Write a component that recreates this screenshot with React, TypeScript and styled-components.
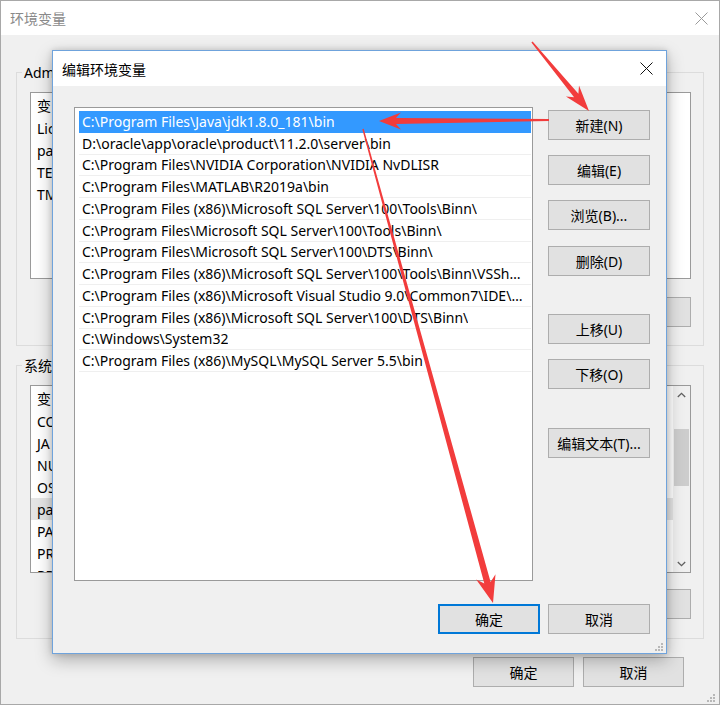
import React from "react";
import styled, { createGlobalStyle } from "styled-components";

const FONT = `"Noto Sans", "Noto Sans CJK SC", sans-serif`;

const GlobalStyle = createGlobalStyle`
  html, body { margin: 0; padding: 0; background: #f0f0f0; }
  body { font-family: ${FONT}; font-size: 14px; color: #000; }
  *, *::before, *::after { box-sizing: border-box; }
`;

const Window = styled.div`
  position: relative;
  width: 720px;
  height: 705px;
  border: 1px solid #a8a8a8;
  background: #f0f0f0;
  display: flex;
  flex-direction: column;
  overflow: hidden;
`;

const TitleBar = styled.div<{ $h: number; $color: string }>`
  flex: none;
  height: ${(p) => p.$h}px;
  background: #fff;
  display: flex;
  align-items: center;
  justify-content: space-between;
  padding-left: 9px;
  color: ${(p) => p.$color};
  font-size: 14px;
  white-space: nowrap;
`;

const CloseBox = styled.div<{ $w: number }>`
  width: ${(p) => p.$w}px;
  height: 100%;
  display: flex;
  align-items: center;
  justify-content: center;
`;

const WinBody = styled.div`
  flex: 1;
  display: flex;
  flex-direction: column;
  padding: 37px 15px 0 15px;
`;

const GroupBox = styled.div<{ $mt?: number; $pb: number }>`
  margin-top: ${(p) => p.$mt ?? 0}px;
  border: 1px solid #dcdcdc;
  padding: 0 12px ${(p) => p.$pb}px 13px;
  display: flex;
  flex-direction: column;
`;

const GroupCaption = styled.div`
  align-self: flex-start;
  margin: -10px 0 0 -8px;
  padding: 0 2px;
  height: 19px;
  line-height: 19px;
  background: #f0f0f0;
  white-space: nowrap;
`;

const VarList = styled.div<{ $h: number }>`
  margin-top: 10px;
  height: ${(p) => p.$h}px;
  background: #fff;
  border: 1px solid #9a9a9a;
  display: flex;
  overflow: hidden;
`;

const VarColumn = styled.div`
  flex: 1;
  min-width: 0;
  display: flex;
  flex-direction: column;
`;

const VarHeader = styled.div`
  flex: none;
  height: 24px;
  display: flex;
  align-items: center;
  padding-left: 6px;
`;

const VarRow = styled.div<{ $sel?: boolean }>`
  flex: none;
  height: 22px;
  display: flex;
  align-items: center;
  padding-left: 6px;
  white-space: nowrap;
  background: ${(p) => (p.$sel ? "#e5e5e5" : "transparent")};
`;

const Scrollbar = styled.div`
  flex: none;
  width: 17px;
  background: #f0f0f0;
  display: flex;
  flex-direction: column;
`;

const ScrollArrow = styled.div`
  flex: none;
  height: 17px;
  display: flex;
  align-items: center;
  justify-content: center;
`;

const ScrollTrack = styled.div`
  flex: 1;
  display: flex;
  flex-direction: column;
`;

const ScrollThumb = styled.div<{ $top: number; $h: number }>`
  margin: ${(p) => p.$top}px 1px 0 1px;
  height: ${(p) => p.$h}px;
  background: #cdcdcd;
`;

const ButtonRow = styled.div<{ $mt: number; $gap: number; $pr?: number }>`
  display: flex;
  justify-content: flex-end;
  gap: ${(p) => p.$gap}px;
  margin-top: ${(p) => p.$mt}px;
  padding-right: ${(p) => p.$pr ?? 0}px;
`;

const Button = styled.button<{ $w?: number; $focus?: boolean; $mt?: number }>`
  flex: none;
  width: ${(p) => p.$w ?? 102}px;
  height: 30px;
  margin: ${(p) => p.$mt ?? 0}px 0 0 0;
  padding: 0;
  background: #e1e1e1;
  border: 1px solid ${(p) => (p.$focus ? "#0078d7" : "#adadad")};
  box-shadow: ${(p) => (p.$focus ? "inset 0 0 0 1px #0078d7" : "none")};
  font-family: ${FONT};
  font-size: 14px;
  color: #000;
  display: flex;
  align-items: center;
  justify-content: center;
  white-space: nowrap;
`;

const Dialog = styled.div`
  position: absolute;
  left: 51px;
  top: 49px;
  width: 615px;
  height: 604px;
  border: 1px solid #6fa3dc;
  background: #f0f0f0;
  box-shadow: 0 6px 16px rgba(0, 0, 0, 0.28), 0 0 6px rgba(0, 0, 0, 0.15);
  display: flex;
  flex-direction: column;
`;

const DialogBody = styled.div`
  flex: 1;
  display: flex;
  flex-direction: column;
  padding: 21px 16px 19px 21px;
`;

const MainRow = styled.div`
  display: flex;
  gap: 15px;
`;

const PathList = styled.div`
  flex: none;
  width: 459px;
  height: 474px;
  background: #fff;
  border: 1px solid #9a9a9a;
  padding: 3px 1px 0 4px;
  display: flex;
  flex-direction: column;
  overflow: hidden;
`;

const PathRow = styled.div<{ $sel?: boolean }>`
  flex: none;
  height: 21.75px;
  display: flex;
  align-items: center;
  padding: 0 4px 0 3px;
  border-bottom: 1px solid ${(p) => (p.$sel ? "#3399ff" : "#efefef")};
  background: ${(p) => (p.$sel ? "#3399ff" : "transparent")};
  color: ${(p) => (p.$sel ? "#fff" : "#000")};
`;

const PathText = styled.span`
  white-space: nowrap;
  overflow: hidden;
  text-overflow: ellipsis;
`;

const ButtonColumn = styled.div`
  flex: none;
  width: 102px;
  display: flex;
  flex-direction: column;
`;

const Grip = styled.svg<{ $r: number; $b: number }>`
  position: absolute;
  right: ${(p) => p.$r}px;
  bottom: ${(p) => p.$b}px;
`;

const Overlay = styled.svg`
  position: absolute;
  left: -1px;
  top: -1px;
  pointer-events: none;
`;

const CloseIcon = ({ color, w = 1 }: { color: string; w?: number }) => (
  <svg width="13" height="13" viewBox="0 0 13 13">
    <path d="M0.5 0.5 L12.5 12.5 M12.5 0.5 L0.5 12.5" stroke={color} strokeWidth={w} fill="none" />
  </svg>
);

const Chevron = ({ up }: { up?: boolean }) => (
  <svg width="9" height="6" viewBox="0 0 9 6">
    <path d={up ? "M0.8 5 L4.5 1.3 L8.2 5" : "M0.8 1 L4.5 4.7 L8.2 1"} stroke="#606060" strokeWidth="1.3" fill="none" />
  </svg>
);

const GripDots = () => (
  <>
    {[
      [8, 0],
      [5, 3],
      [8, 3],
      [2, 6],
      [5, 6],
      [8, 6],
    ].map(([x, y], i) => (
      <rect key={i} x={x} y={y + 2} width="2" height="2" fill="#b8b8b8" />
    ))}
  </>
);

function arrowPoints(
  x1: number,
  y1: number,
  x2: number,
  y2: number,
  tailW: number,
  shaftW: number,
  headLen: number,
  headW: number,
  notch: number
) {
  const dx = x2 - x1;
  const dy = y2 - y1;
  const L = Math.hypot(dx, dy);
  const ux = dx / L;
  const uy = dy / L;
  const nx = -uy;
  const ny = ux;
  const bx = x2 - ux * headLen;
  const by = y2 - uy * headLen;
  const sx = bx + ux * notch;
  const sy = by + uy * notch;
  const pts = [
    [x1 + (nx * tailW) / 2, y1 + (ny * tailW) / 2],
    [sx + (nx * shaftW) / 2, sy + (ny * shaftW) / 2],
    [bx + (nx * headW) / 2, by + (ny * headW) / 2],
    [x2, y2],
    [bx - (nx * headW) / 2, by - (ny * headW) / 2],
    [sx - (nx * shaftW) / 2, sy - (ny * shaftW) / 2],
    [x1 - (nx * tailW) / 2, y1 - (ny * tailW) / 2],
  ];
  return pts.map(([a, b]) => `${a.toFixed(1)},${b.toFixed(1)}`).join(" ");
}

const userVars = ["Lic", "pa", "TE", "TM"];
const sysVars = ["CO", "JA", "NU", "OS", "pa", "PA", "PR", "PR"];

const paths = [
  "C:\\Program Files\\Java\\jdk1.8.0_181\\bin",
  "D:\\oracle\\app\\oracle\\product\\11.2.0\\server\\bin",
  "C:\\Program Files\\NVIDIA Corporation\\NVIDIA NvDLISR",
  "C:\\Program Files\\MATLAB\\R2019a\\bin",
  "C:\\Program Files (x86)\\Microsoft SQL Server\\100\\Tools\\Binn\\",
  "C:\\Program Files\\Microsoft SQL Server\\100\\Tools\\Binn\\",
  "C:\\Program Files\\Microsoft SQL Server\\100\\DTS\\Binn\\",
  "C:\\Program Files (x86)\\Microsoft SQL Server\\100\\Tools\\Binn\\VSShell\\Common7\\IDE\\",
  "C:\\Program Files (x86)\\Microsoft Visual Studio 9.0\\Common7\\IDE\\PrivateAssemblies\\",
  "C:\\Program Files (x86)\\Microsoft SQL Server\\100\\DTS\\Binn\\",
  "C:\\Windows\\System32",
  "C:\\Program Files (x86)\\MySQL\\MySQL Server 5.5\\bin",
];

const RED = "#f23c3c";

export default function App() {
  return (
    <>
      <GlobalStyle />
      <Window>
        <TitleBar $h={34} $color="#8a8a8a">
          <span>环境变量</span>
          <CloseBox $w={36}>
            <CloseIcon color="#9a9a9a" />
          </CloseBox>
        </TitleBar>
        <WinBody>
          <GroupBox $pb={18}>
            <GroupCaption>Adm</GroupCaption>
            <VarList $h={187}>
              <VarColumn>
                <VarHeader>变</VarHeader>
                {userVars.map((k, i) => (
                  <VarRow key={k + i}>{k}</VarRow>
                ))}
              </VarColumn>
            </VarList>
            <ButtonRow $mt={18} $gap={9}>
              <Button $w={101} />
            </ButtonRow>
          </GroupBox>

          <GroupBox $mt={19} $pb={19}>
            <GroupCaption>系统</GroupCaption>
            <VarList $h={188}>
              <VarColumn>
                <VarHeader>变</VarHeader>
                {sysVars.map((k, i) => (
                  <VarRow key={k + i} $sel={i === 4}>
                    {k}
                  </VarRow>
                ))}
              </VarColumn>
              <Scrollbar>
                <ScrollArrow>
                  <Chevron up />
                </ScrollArrow>
                <ScrollTrack>
                  <ScrollThumb $top={26} $h={57} />
                </ScrollTrack>
                <ScrollArrow>
                  <Chevron />
                </ScrollArrow>
              </Scrollbar>
            </VarList>
            <ButtonRow $mt={16} $gap={9}>
              <Button $w={101} />
            </ButtonRow>
          </GroupBox>

          <ButtonRow $mt={18} $gap={9} $pr={20}>
            <Button $w={101}>确定</Button>
            <Button $w={101}>取消</Button>
          </ButtonRow>
        </WinBody>
        <Grip $r={4} $b={2} width="10" height="10" viewBox="0 0 10 10">
          <GripDots />
        </Grip>

        <Dialog>
          <TitleBar $h={35} $color="#000">
            <span>编辑环境变量</span>
            <CloseBox $w={40}>
              <CloseIcon color="#111" />
            </CloseBox>
          </TitleBar>
          <DialogBody>
            <MainRow>
              <PathList>
                {paths.map((p, i) => (
                  <PathRow key={i} $sel={i === 0}>
                    <PathText>{p}</PathText>
                  </PathRow>
                ))}
              </PathList>
              <ButtonColumn>
                <Button $mt={3}>新建(N)</Button>
                <Button $mt={15}>编辑(E)</Button>
                <Button $mt={15}>浏览(B)...</Button>
                <Button $mt={16}>删除(D)</Button>
                <Button $mt={38}>上移(U)</Button>
                <Button $mt={15}>下移(O)</Button>
                <Button $mt={39}>编辑文本(T)...</Button>
              </ButtonColumn>
            </MainRow>
            <ButtonRow $mt={23} $gap={8}>
              <Button $focus>确定</Button>
              <Button>取消</Button>
            </ButtonRow>
          </DialogBody>
          <Grip $r={3} $b={2} width="10" height="10" viewBox="0 0 10 10">
            <GripDots />
          </Grip>
        </Dialog>

        <Overlay width="720" height="705" viewBox="0 0 720 705">
          <polygon points={arrowPoints(532, 42, 589, 111, 1.5, 5.5, 26, 17, 6)} fill={RED} />
          <polygon points={arrowPoints(549, 120, 379, 121, 2, 6, 22, 17, 5)} fill={RED} />
          <polygon points={arrowPoints(363, 129, 493, 603, 1.5, 6.5, 27, 20, 6)} fill={RED} />
        </Overlay>
      </Window>
    </>
  );
}
